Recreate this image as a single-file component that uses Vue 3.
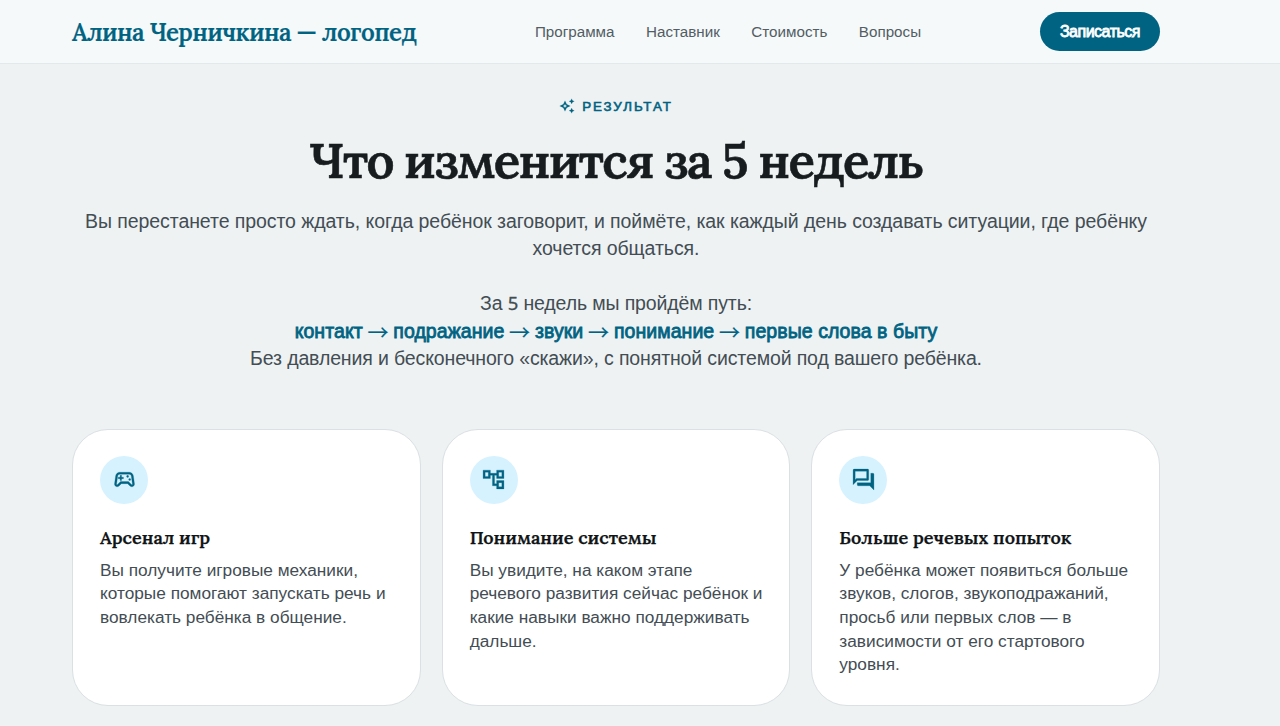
<template>
  <div class="page">
    <header class="header">
      <div class="container header-row">
        <a class="logo" href="#">Алина Черничкина — логопед</a>
        <nav class="nav">
          <a v-for="link in links" :key="link" href="#">{{ link }}</a>
        </nav>
        <button class="cta">Записаться</button>
      </div>
    </header>

    <section class="result container">
      <div class="eyebrow">
        <svg class="spark" viewBox="0 0 24 24">
          <path d="M19 9l1.25-2.75L23 5l-2.75-1.25L19 1l-1.25 2.75L15 5l2.75 1.25L19 9zm0 6l-1.25 2.75L15 19l2.75 1.25L19 23l1.25-2.75L23 19l-2.75-1.25L19 15zm-7.5-5.5L9 4 6.5 9.5 1 12l5.5 2.5L9 20l2.5-5.5L17 12l-5.5-2.5zm-1.51 3.49L9 15.17l-.99-2.18L5.83 12l2.18-.99L9 8.83l.99 2.18 2.18.99-2.18.99z" />
        </svg>
        <span>РЕЗУЛЬТАТ</span>
      </div>
      <h1>Что изменится за 5 недель</h1>
      <div class="lead">
        <p>
          Вы перестанете просто ждать, когда ребёнок заговорит, и поймёте, как каждый день создавать ситуации, где ребёнку<br />
          хочется общаться.
        </p>
        <p class="path">
          За <span class="digit">5</span> недель мы пройдём путь:<br />
          <strong>
            <template v-for="(step, index) in steps" :key="step">
              <span v-if="index" class="arrow"> → </span>{{ step }}</template>
          </strong><br />
          Без давления и бесконечного «скажи», с понятной системой под вашего ребёнка.
        </p>
      </div>

      <div class="cards">
        <article v-for="card in cards" :key="card.title" class="card">
          <div class="icon">
            <svg viewBox="0 0 24 24"><path :d="card.icon" /></svg>
          </div>
          <h3>{{ card.title }}</h3>
          <p>{{ card.text }}</p>
        </article>
      </div>
    </section>
  </div>
</template>

<script setup>
const links = ["Программа", "Наставник", "Стоимость", "Вопросы"];

const steps = ["контакт", "подражание", "звуки", "понимание", "первые слова в быту"];

const cards = [
  {
    title: "Арсенал игр",
    text: "Вы получите игровые механики, которые помогают запускать речь и вовлекать ребёнка в общение.",
    icon: "M21.58 16.09l-1.09-7.66C20.21 6.46 18.52 5 16.53 5H7.47C5.48 5 3.79 6.46 3.51 8.43l-1.09 7.66C2.2 17.63 3.39 19 4.94 19c.68 0 1.32-.27 1.8-.75L9 16h6l2.25 2.25c.48.48 1.13.75 1.8.75 1.56 0 2.75-1.37 2.53-2.91zm-2.1.72c-.08.09-.21.19-.42.19-.15 0-.29-.06-.39-.16L15.83 14H8.17l-2.84 2.84c-.1.1-.24.16-.39.16-.21 0-.34-.1-.42-.19-.08-.09-.16-.23-.13-.44l1.09-7.66C5.63 7.74 6.48 7 7.47 7h9.06c.99 0 1.84.74 1.98 1.72l1.09 7.66c.03.2-.05.34-.12.43zM9.2 8H7.8v1.8H6v1.4h1.8V13h1.4v-1.8H11V9.8H9.2zM17 11a1 1 0 1 0 0 2 1 1 0 0 0 0-2zM15 8a1 1 0 1 0 0 2 1 1 0 0 0 0-2z",
  },
  {
    title: "Понимание системы",
    text: "Вы увидите, на каком этапе речевого развития сейчас ребёнок и какие навыки важно поддерживать дальше.",
    icon: "M22 11V3h-7v3H9V3H2v8h7V8h2v10h4v3h7v-8h-7v3h-2V8h2v3h7zM7 9H4V5h3v4zm10 6h3v4h-3v-4zm0-10h3v4h-3V5z",
  },
  {
    title: "Больше речевых попыток",
    text: "У ребёнка может появиться больше звуков, слогов, звукоподражаний, просьб или первых слов — в зависимости от его стартового уровня.",
    icon: "M15 4v7H5.17L4 12.17V4h11m1-2H3c-.55 0-1 .45-1 1v14l4-4h10c.55 0 1-.45 1-1V3c0-.55-.45-1-1-1zm5 4h-2v9H6v2c0 .55.45 1 1 1h11l4 4V7c0-.55-.45-1-1-1z",
  },
];
</script>

<style>
body {
  background: #eef2f3;
}
</style>

<style scoped>
.page {
  height: 726px;
  overflow: hidden;
  font-family: "Liberation Sans", Arial, sans-serif;
  color: #434d54;
}

.container {
  width: 1088px;
  margin-left: 72px;
}

.header {
  height: 63px;
  background: #f5f9fa;
  border-bottom: 1px solid #e3e8ea;
}

.header-row {
  display: flex;
  align-items: center;
  justify-content: space-between;
  height: 63px;
}

.logo {
  width: 344px;
  padding-top: 1px;
  font-family: Lora, "Liberation Serif", serif;
  font-size: 24px;
  font-weight: 600;
  letter-spacing: -0.57px;
  color: #006382;
  -webkit-text-stroke: 0.2px #006382;
  text-decoration: none;
  white-space: nowrap;
}

.nav {
  display: flex;
  gap: 31.5px;
}

.nav a {
  font-size: 15.2px;
  color: #535d64;
  text-decoration: none;
}

.cta {
  width: 120px;
  height: 39px;
  padding: 0;
  border: none;
  border-radius: 20px;
  background: #006382;
  color: #fff;
  font-family: inherit;
  font-size: 16px;
  letter-spacing: -0.5px;
  -webkit-text-stroke: 0.8px #fff;
}

.result {
  padding-top: 33px;
  text-align: center;
}

.eyebrow {
  display: flex;
  align-items: center;
  justify-content: center;
  gap: 7px;
  height: 18px;
  color: #006382;
  font-size: 13.3px;
  letter-spacing: 1.95px;
  -webkit-text-stroke: 0.6px #006382;
}

.spark {
  width: 16px;
  height: 16px;
  fill: #006382;
  stroke: #006382;
  stroke-width: 0.2;
}

h1 {
  margin: 13px 0 0;
  font-family: Lora, "Liberation Serif", serif;
  font-size: 49px;
  font-weight: 600;
  letter-spacing: -1.67px;
  line-height: 64px;
  color: #171c1f;
  -webkit-text-stroke: 0.6px #171c1f;
  white-space: nowrap;
}

.lead {
  margin-top: 16px;
  font-size: 19.5px;
  letter-spacing: -0.07px;
  line-height: 27.4px;
  white-space: nowrap;
}

.lead p {
  margin: 0 0 27.5px;
}

.lead .path {
  letter-spacing: -0.13px;
}

.lead strong {
  font-weight: 400;
  letter-spacing: 0.06px;
  color: #006382;
  -webkit-text-stroke: 0.8px #006382;
}

.digit {
  font-family: "Noto Sans", sans-serif;
  font-size: 18.5px;
  line-height: 1;
  -webkit-text-stroke: 0.3px #434d54;
}

.arrow {
  font-family: "Noto Sans CJK JP", sans-serif;
  font-size: 21px;
  line-height: 1;
  vertical-align: -2px;
  white-space: pre;
  -webkit-text-stroke: 0.2px #006382;
}

.cards {
  display: grid;
  grid-template-columns: repeat(3, 1fr);
  gap: 21px;
  margin-top: 56px;
  text-align: left;
}

.card {
  box-sizing: border-box;
  height: 277px;
  padding: 26px 24px 0 27px;
  border: 1px solid #dae0e3;
  border-radius: 36px;
  background: #fff;
}

.icon {
  display: flex;
  align-items: center;
  justify-content: center;
  width: 48px;
  height: 48px;
  border-radius: 50%;
  background: #d6f2ff;
}

.icon svg {
  width: 25px;
  height: 25px;
  fill: #006382;
  stroke: #006382;
  stroke-width: 0.25;
}

.card h3 {
  margin: 21px 0 8px;
  font-family: Lora, "Liberation Serif", serif;
  font-size: 18px;
  font-weight: 600;
  line-height: 26px;
  color: #101416;
  -webkit-text-stroke: 0.25px #101416;
  white-space: nowrap;
}

.card p {
  margin: 0;
  font-size: 17.25px;
  line-height: 23.7px;
}
</style>
